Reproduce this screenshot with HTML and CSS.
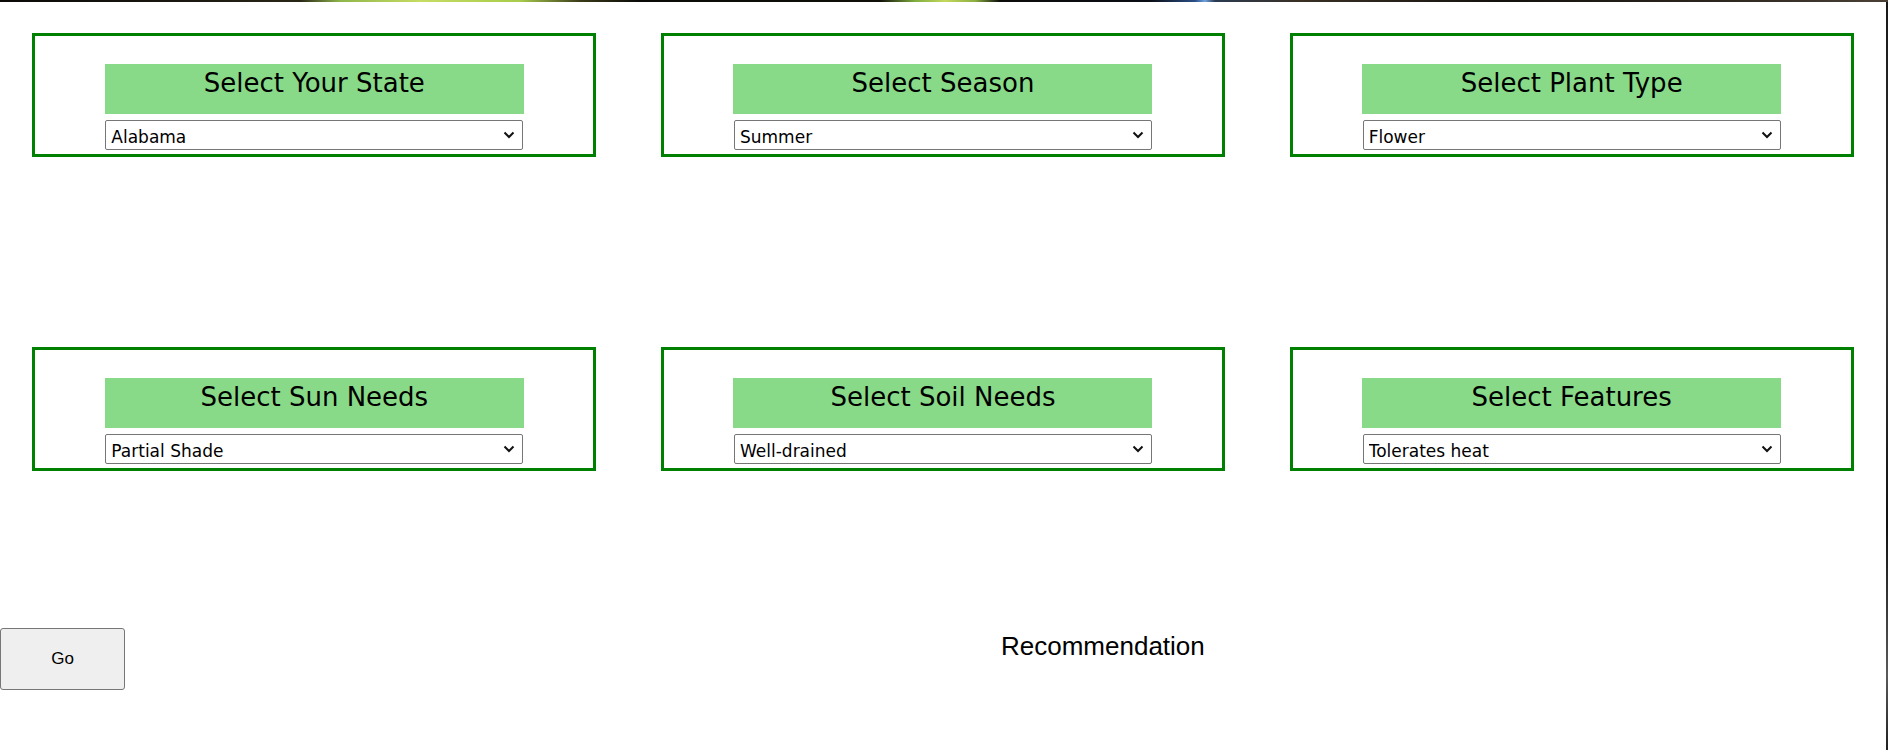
FILE: index.html
```html
<!DOCTYPE html>
<html lang="en">
<head>
<meta charset="utf-8">
<title>Plant Recommendation</title>
<link rel="stylesheet" href="styles.css">
</head>
<body>
<div class="page">
  <div class="row">
    <div class="box">
      <div class="label">Select Your State</div>
      <div class="select-wrap">
        <select class="choice"><option>Alabama</option><option>Alaska</option><option>Arizona</option></select>
        <svg class="chev" width="12" height="8" viewBox="0 0 12 8"><path d="M1.5 1.5 L6 6 L10.5 1.5" fill="none" stroke="#111" stroke-width="2"/></svg>
      </div>
    </div>
    <div class="box">
      <div class="label">Select Season</div>
      <div class="select-wrap">
        <select class="choice"><option>Summer</option><option>Fall</option><option>Winter</option><option>Spring</option></select>
        <svg class="chev" width="12" height="8" viewBox="0 0 12 8"><path d="M1.5 1.5 L6 6 L10.5 1.5" fill="none" stroke="#111" stroke-width="2"/></svg>
      </div>
    </div>
    <div class="box">
      <div class="label">Select Plant Type</div>
      <div class="select-wrap">
        <select class="choice"><option>Flower</option><option>Shrub</option><option>Tree</option></select>
        <svg class="chev" width="12" height="8" viewBox="0 0 12 8"><path d="M1.5 1.5 L6 6 L10.5 1.5" fill="none" stroke="#111" stroke-width="2"/></svg>
      </div>
    </div>
  </div>
  <div class="row row-second">
    <div class="box">
      <div class="label">Select Sun Needs</div>
      <div class="select-wrap">
        <select class="choice"><option>Partial Shade</option><option>Full Sun</option><option>Full Shade</option></select>
        <svg class="chev" width="12" height="8" viewBox="0 0 12 8"><path d="M1.5 1.5 L6 6 L10.5 1.5" fill="none" stroke="#111" stroke-width="2"/></svg>
      </div>
    </div>
    <div class="box">
      <div class="label">Select Soil Needs</div>
      <div class="select-wrap">
        <select class="choice"><option>Well-drained</option><option>Moist</option><option>Clay</option></select>
        <svg class="chev" width="12" height="8" viewBox="0 0 12 8"><path d="M1.5 1.5 L6 6 L10.5 1.5" fill="none" stroke="#111" stroke-width="2"/></svg>
      </div>
    </div>
    <div class="box">
      <div class="label">Select Features</div>
      <div class="select-wrap">
        <select class="choice"><option>Tolerates heat</option><option>Attracts pollinators</option><option>Deer resistant</option></select>
        <svg class="chev" width="12" height="8" viewBox="0 0 12 8"><path d="M1.5 1.5 L6 6 L10.5 1.5" fill="none" stroke="#111" stroke-width="2"/></svg>
      </div>
    </div>
  </div>
  <div class="actions">
    <button class="go" type="button">Go</button>
    <div class="recommendation">Recommendation</div>
  </div>
</div>
</body>
</html>
```

FILE: styles.css
```css
html, body {
  margin: 0;
  padding: 0;
}

body {
  width: 1888px;
  height: 750px;
  overflow: hidden;
  background:
    linear-gradient(90deg,
      #0b0a08 0px, #1a1710 180px, #2a2616 300px,
      #8fb64a 340px, #c6dc62 420px, #a8cc4c 520px, #3a3a18 580px,
      #0a0a08 640px, #101008 880px, #7fae3e 915px, #c4d85c 945px, #8db040 975px,
      #0c0c0a 1000px, #0a0d14 1150px, #2a4e86 1195px, #6ea2e0 1205px, #2a3a50 1215px,
      #3a3024 1300px, #14120e 1500px, #2a241c 1700px, #4a4036 1888px) top / 100% 2px no-repeat,
    linear-gradient(180deg, #181818, #3a3a3a 40%, #101010 70%, #5a5a5a 90%, #202020);
  font-family: "DejaVu Sans", Verdana, sans-serif;
}

.page {
  width: 1886px;
  height: 748px;
  margin-top: 2px;
  background: #ffffff;
  padding-top: 31px;
  box-sizing: border-box;
}

.row {
  display: flex;
  justify-content: space-around;
}

.row-second {
  margin-top: 190px;
}

.box {
  width: 564px;
  height: 124px;
  box-sizing: border-box;
  border: 3px solid #008000;
  padding-top: 28px;
  display: flex;
  flex-direction: column;
  align-items: center;
}

.label {
  width: 419px;
  height: 50px;
  box-sizing: border-box;
  padding-top: 4px;
  background: #88da88;
  color: #000000;
  font-family: "DejaVu Sans", Verdana, sans-serif;
  font-size: 26px;
  line-height: 30px;
  text-align: center;
}

.select-wrap {
  position: relative;
  width: 418px;
  height: 30px;
  margin-top: 6px;
}

.choice {
  -webkit-appearance: none;
  appearance: none;
  display: block;
  width: 418px;
  height: 30px;
  margin: 0;
  box-sizing: border-box;
  border: 1px solid #767676;
  border-radius: 2px;
  background-color: #ffffff;
  color: #000000;
  font-family: "DejaVu Sans", Verdana, sans-serif;
  font-size: 17px;
  padding: 4px 24px 0 5px;
}

.chev {
  position: absolute;
  right: 8px;
  top: 11px;
  pointer-events: none;
}

.actions {
  display: flex;
  align-items: flex-start;
  margin-top: 157px;
}

.go {
  width: 125px;
  height: 62px;
  margin: 0;
  box-sizing: border-box;
  border: 1px solid #767676;
  border-radius: 3px;
  background: #efefef;
  color: #000000;
  font-family: "Liberation Sans", Arial, sans-serif;
  font-size: 17px;
}

.recommendation {
  margin-left: 876px;
  margin-top: 3px;
  font-family: "Liberation Sans", Arial, sans-serif;
  font-size: 26px;
  color: #000000;
}
```
